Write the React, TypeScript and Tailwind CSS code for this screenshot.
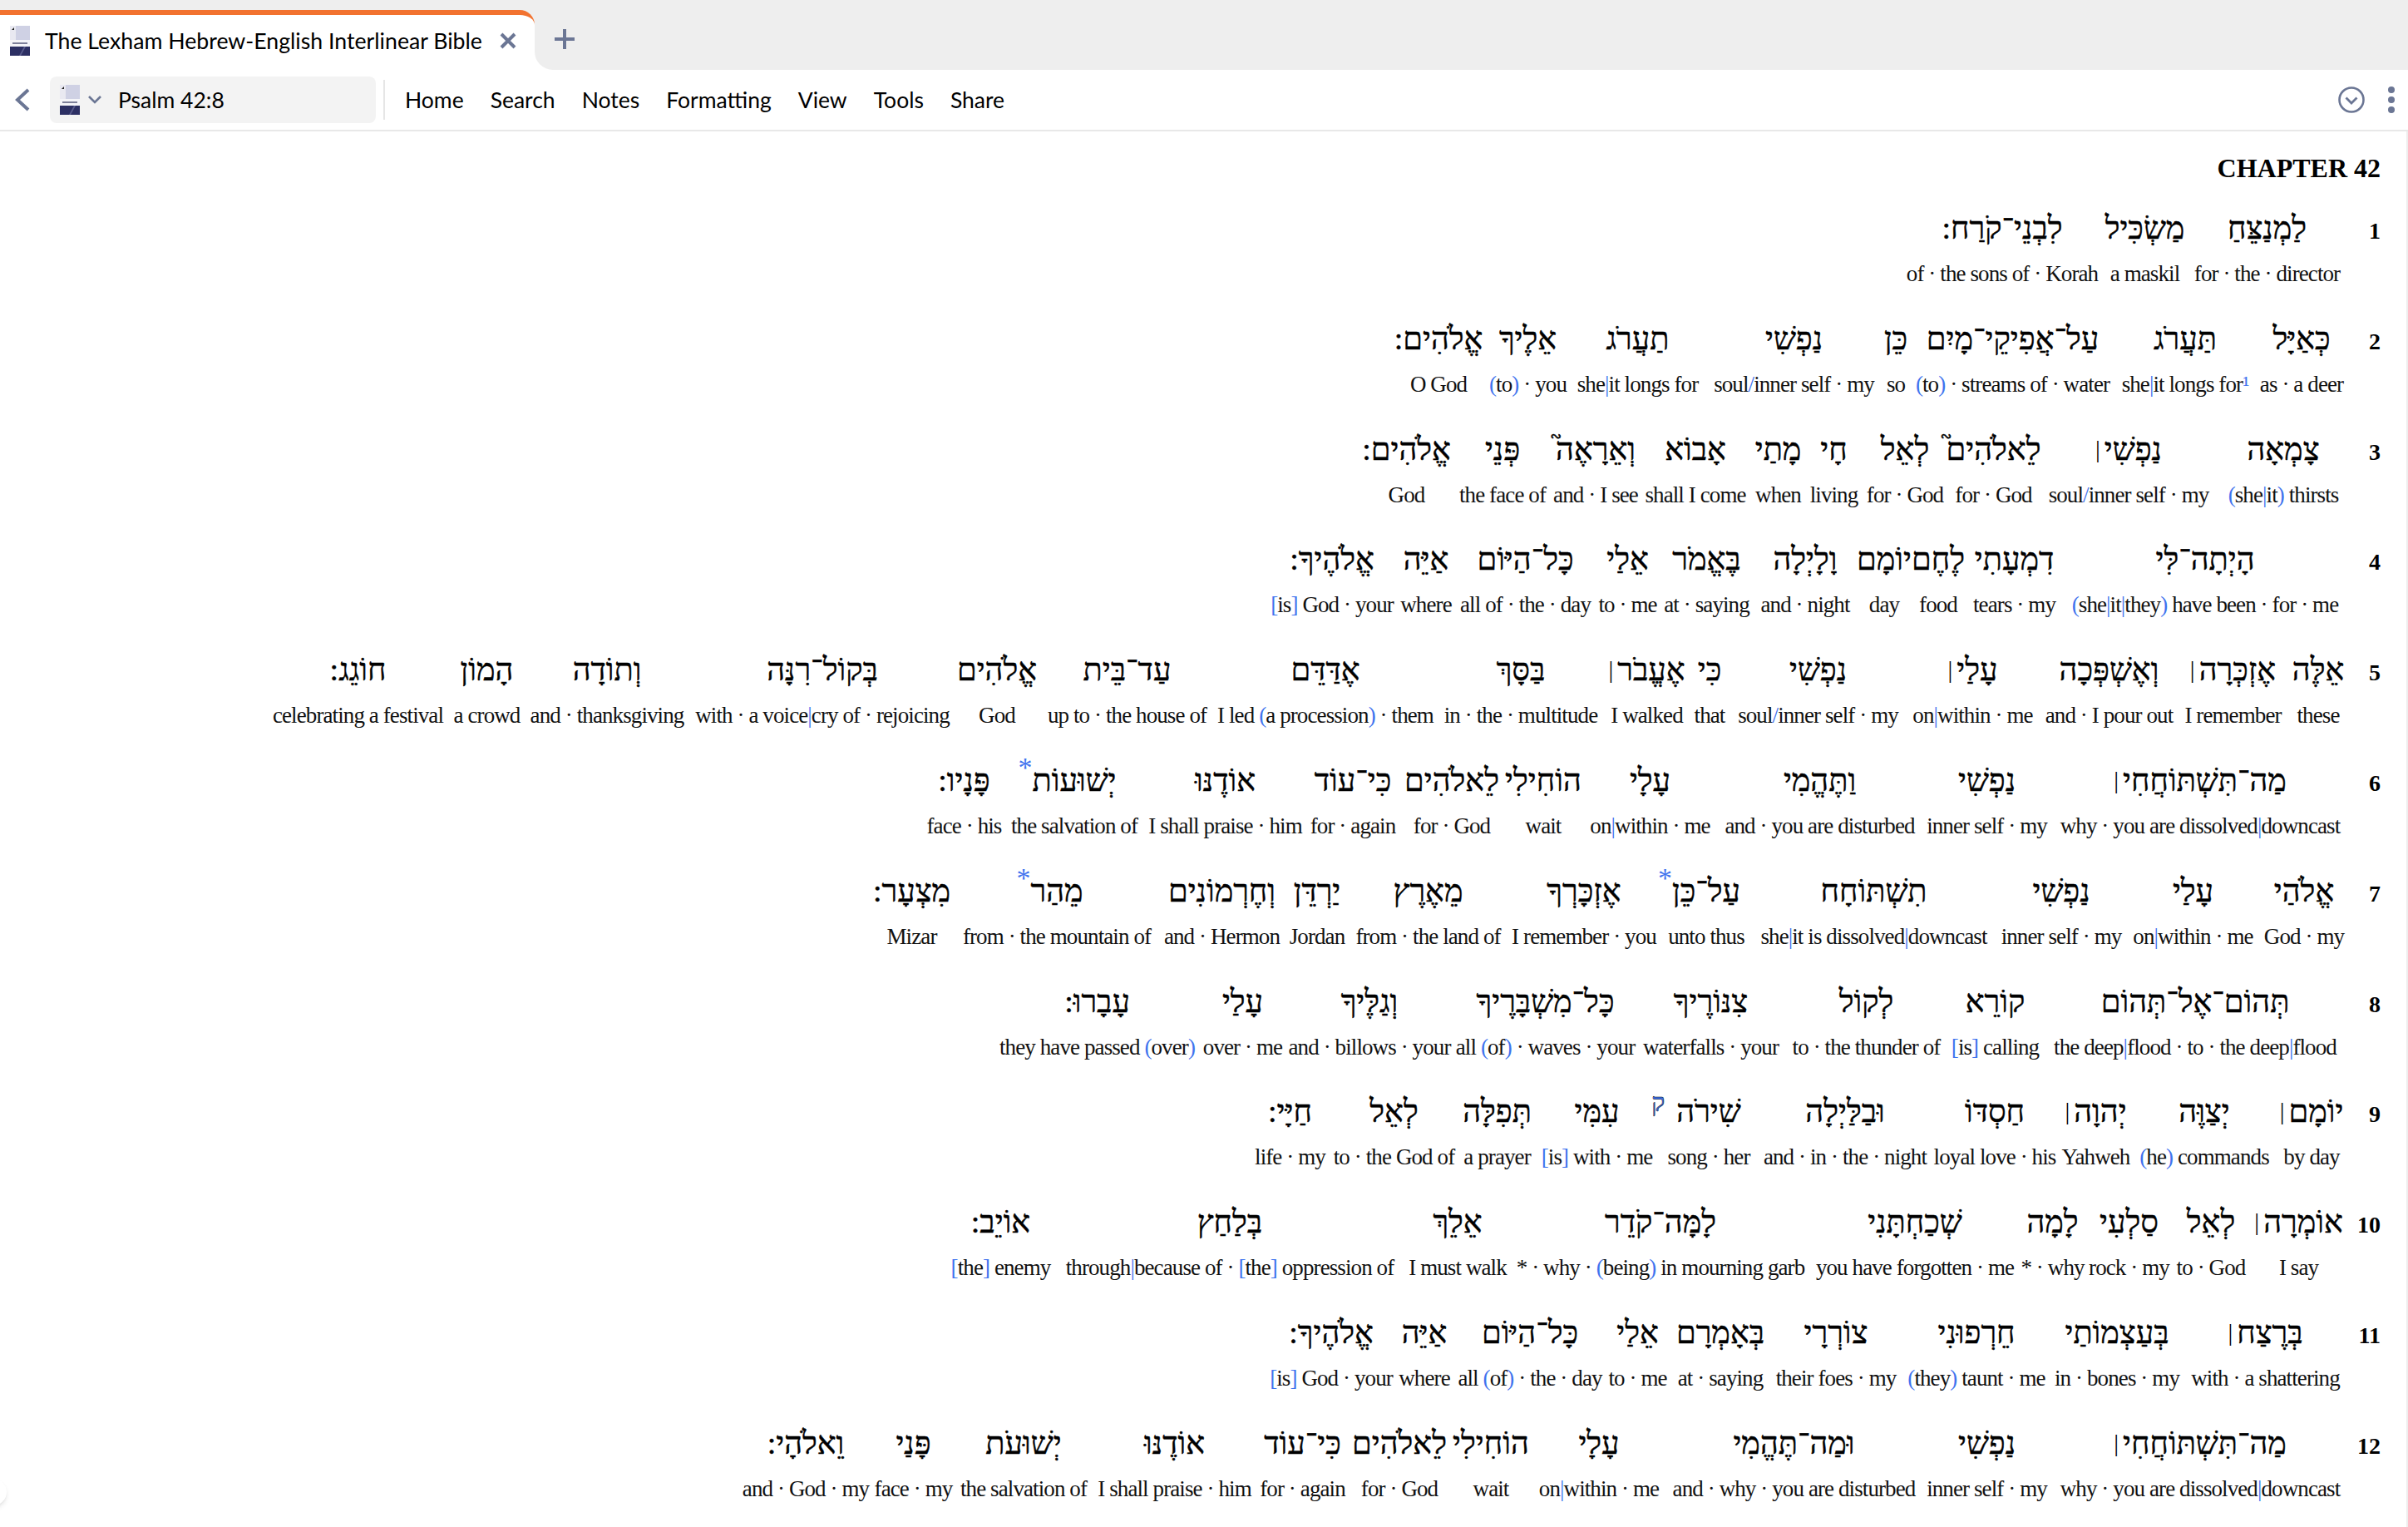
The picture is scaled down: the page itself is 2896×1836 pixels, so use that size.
import React from 'react';

type Cell = [string, string, string, string?];

const rows: { n: number; cells: Cell[] }[] = [
  { n: 1, cells: [
    ['לַמְנַצֵּחַ', 'for · the · director', 'w-[195px]'],
    ['מַשְׂכִּיל', 'a maskil', 'w-[99px]'],
    ['לִבְנֵי־קֹרַח:', 'of · the sons of · Korah', 'w-[244px]'],
  ] },
  { n: 2, cells: [
    ['כְּאַיָּל', 'as · a deer', 'w-[112px]'],
    ['תַּעֲרֹג', 'she|it longs for¹', 'w-[168px]'],
    ['עַל־אֲפִיקֵי־מָיִם', '(to) · streams of · water', 'w-[247px]'],
    ['כֵּן', 'so', 'w-[34px]'],
    ['נַפְשִׁי', 'soul/inner self · my', 'w-[211px]'],
    ['תַעֲרֹג', 'she|it longs for', 'w-[165px]'],
    ['אֵלֶיךָ', '(to) · you', 'w-[99px]'],
    ['אֱלֹהִים:', 'O God', 'w-[116px]'],
  ] },
  { n: 3, cells: [
    ['צָמְאָה', '(she|it) thirsts', 'w-[156px]'],
    ['נַפְשִׁי׀', 'soul/inner self · my', 'w-[216px]'],
    ['לֵאלֹהִים֮', 'for · God', 'w-[109px]'],
    ['לְאֵל', 'for · God', 'w-[104px]'],
    ['חָי', 'living', 'w-[67px]'],
    ['מָתַי', 'when', 'w-[67px]'],
    ['אָבוֹא', 'shall I come', 'w-[132px]'],
    ['וְאֵרָאֶה֮', 'and · I see', 'w-[108px]'],
    ['פְּנֵי', 'the face of', 'w-[116px]'],
    ['אֱלֹהִים:', 'God', 'w-[115px]'],
  ] },
  { n: 4, cells: [
    ['הָיְתָה־לִּי', '(she|it|they) have been · for · me', 'w-[344px]'],
    ['דִמְעָתִי', 'tears · my', 'w-[115px]'],
    ['לֶחֶם', 'food', 'w-[68px]'],
    ['יוֹמָם', 'day', 'w-[62px]'],
    ['וָלָיְלָה', 'and · night', 'w-[128px]'],
    ['בֶּאֱמֹר', 'at · saying', 'w-[109px]'],
    ['אֵלַי', 'to · me', 'w-[81px]'],
    ['כָּל־הַיּוֹם', 'all of · the · day', 'w-[165px]'],
    ['אַיֵּה', 'where', 'w-[74px]'],
    ['אֱלֹהֶיךָ:', '[is] God · your', 'w-[152px]'],
  ] },
  { n: 5, cells: [
    ['אֵלֶּה', 'these', 'w-[72px]'],
    ['אֶזְכְּרָה׀', 'I remember', 'w-[133px]'],
    ['וְאֶשְׁפְּכָה', 'and · I pour out', 'w-[165px]'],
    ['עָלַי׀', 'on|within · me', 'w-[163px]'],
    ['נַפְשִׁי', 'soul/inner self · my', 'w-[209px]'],
    ['כִּי', 'that', 'w-[52px]'],
    ['אֶעֱבֹר׀', 'I walked', 'w-[99px]'],
    ['בַּסָּךְ', 'in · the · multitude', 'w-[204px]'],
    ['אֶדַּדֵּם', 'I led (a procession) · them', 'w-[266px]'],
    ['עַד־בֵּית', 'up to · the house of', 'w-[211px]'],
    ['אֱלֹהִים', 'God', 'w-[102px]'],
    ['בְּקוֹל־רִנָּה', 'with · a voice|cry of · rejoicing', 'w-[318px]'],
    ['וְתוֹדָה', 'and · thanksgiving', 'w-[200px]'],
    ['הָמוֹן', 'a crowd', 'w-[89px]'],
    ['חוֹגֵג:', 'celebrating a festival', 'w-[221px]'],
  ] },
  { n: 6, cells: [
    ['מַה־תִּשְׁתּוֹחֲחִי׀', 'why · you are dissolved|downcast', 'w-[356px]'],
    ['נַפְשִׁי', 'inner self · my', 'w-[157px]'],
    ['וַתֶּהֱמִי', 'and · you are disturbed', 'w-[245px]'],
    ['עָלָי', 'on|within · me', 'w-[163px]'],
    ['הוֹחִילִי', 'wait', 'w-[94px]'],
    ['לֵאלֹהִים', 'for · God', 'w-[126px]'],
    ['כִּי־עוֹד', 'for · again', 'w-[112px]'],
    ['אוֹדֶנּוּ', 'I shall praise · him', 'w-[195px]'],
    ['יְשׁוּעוֹת', 'the salvation of', 'w-[168px]', '*'],
    ['פָּנָיו:', 'face · his', 'w-[97px]'],
  ] },
  { n: 7, cells: [
    ['אֱלֹהַי', 'God · my', 'w-[106px]'],
    ['עָלַי', 'on|within · me', 'w-[161px]'],
    ['נַפְשִׁי', 'inner self · my', 'w-[156px]'],
    ['תִשְׁתּוֹחָח', 'she|it is dissolved|downcast', 'w-[295px]'],
    ['עַל־כֵּן', 'unto thus', 'w-[108px]', '*'],
    ['אֶזְכָּרְךָ', 'I remember · you', 'w-[186px]'],
    ['מֵאֶרֶץ', 'from · the land of', 'w-[189px]'],
    ['יַרְדֵּן', 'Jordan', 'w-[78px]'],
    ['וְחֶרְמוֹנִים', 'and · Hermon', 'w-[151px]'],
    ['מֵהַר', 'from · the mountain of', 'w-[246px]', '*'],
    ['מִצְעָר:', 'Mizar', 'w-[103px]'],
  ] },
  { n: 8, cells: [
    ['תְּהוֹם־אֶל־תְּהוֹם', 'the deep|flood · to · the deep|flood', 'w-[368px]'],
    ['קוֹרֵא', '[is] calling', 'w-[113px]'],
    ['לְקוֹל', 'to · the thunder of', 'w-[197px]'],
    ['צִנּוֹרֶיךָ', 'waterfalls · your', 'w-[177px]'],
    ['כָּל־מִשְׁבָּרֶיךָ', 'all (of) · waves · your', 'w-[221px]'],
    ['וְגַלֶּיךָ', 'and · billows · your', 'w-[202px]'],
    ['עָלַי', 'over · me', 'w-[103px]'],
    ['עָבָרוּ:', 'they have passed (over)', 'w-[247px]'],
  ] },
  { n: 9, cells: [
    ['יוֹמָם׀', 'by day', 'w-[88px]'],
    ['יְצַוֶּה', '(he) commands', 'w-[170px]'],
    ['יְהוָה׀', 'Yahweh', 'w-[91px]'],
    ['חַסְדּוֹ', 'loyal love · his', 'w-[152px]'],
    ['וּבַלַּיְלָה', 'and · in · the · night', 'w-[208px]'],
    ['שִׁירֹה', 'song · her', 'w-[120px]', 'ק'],
    ['עִמִּי', '[is] with · me', 'w-[149px]'],
    ['תְּפִלָּה', 'a prayer', 'w-[91px]'],
    ['לְאֵל', 'to · the God of', 'w-[157px]'],
    ['חַיָּי:', 'life · my', 'w-[93px]'],
  ] },
  { n: 10, cells: [
    ['אוֹמְרָה׀', 'I say', 'w-[119px]'],
    ['לְאֵל', 'to · God', 'w-[92px]'],
    ['סַלְעִי', 'rock · my', 'w-[105px]'],
    ['לָמָה', '* · why', 'w-[79px]'],
    ['שְׁכַחְתָּנִי', 'you have forgotten · me', 'w-[252px]'],
    ['לָמָּה־קֹדֵר', '* · why · (being) in mourning garb', 'w-[360px]'],
    ['אֵלֵךְ', 'I must walk', 'w-[128px]'],
    ['בְּלַחַץ', 'through|because of · [the] oppression of', 'w-[420px]'],
    ['אוֹיֵב:', '[the] enemy', 'w-[131px]'],
  ] },
  { n: 11, cells: [
    ['בְּרֶצַח׀', 'with · a shattering', 'w-[199px]'],
    ['בְּעַצְמוֹתַי', 'in · bones · my', 'w-[158px]'],
    ['חֵרְפוּנִי', '(they) taunt · me', 'w-[180px]'],
    ['צוֹרְרָי', 'their foes · my', 'w-[158px]'],
    ['בְּאָמְרָם', 'at · saying', 'w-[120px]'],
    ['אֵלַי', 'to · me', 'w-[79px]'],
    ['כָּל־הַיּוֹם', 'all (of) · the · day', 'w-[180px]'],
    ['אַיֵּה', 'where', 'w-[74px]'],
    ['אֱלֹהֶיךָ:', '[is] God · your', 'w-[150px]'],
  ] },
  { n: 12, cells: [
    ['מַה־תִּשְׁתּוֹחֲחִי׀', 'why · you are dissolved|downcast', 'w-[356px]'],
    ['נַפְשִׁי', 'inner self · my', 'w-[157px]'],
    ['וּמַה־תֶּהֱמִי', 'and · why · you are disturbed', 'w-[307px]'],
    ['עָלָי', 'on|within · me', 'w-[162px]'],
    ['הוֹחִילִי', 'wait', 'w-[98px]'],
    ['לֵאלֹהִים', 'for · God', 'w-[122px]'],
    ['כִּי־עוֹד', 'for · again', 'w-[111px]'],
    ['אוֹדֶנּוּ', 'I shall praise · him', 'w-[197px]'],
    ['יְשׁוּעֹת', 'the salvation of', 'w-[166px]'],
    ['פָּנַי', 'face · my', 'w-[99px]'],
    ['וֵאלֹהָי:', 'and · God · my', 'w-[160px]'],
  ] },
];

function BookIcon() {
  return (
    <svg viewBox="0 0 24 36" className="h-9 w-6 shrink-0">
      <rect width="24" height="36" fill="#f4f4f8" />
      <rect x="7" y="0" width="17" height="17" fill="#cfd1e4" />
      <rect x="0" y="0" width="7" height="17" fill="#e9e9f1" />
      <path d="M2 5l3-3v3z" fill="#222" />
      <rect x="3" y="20" width="18" height="2" fill="#7d7f99" />
      <rect x="0" y="25" width="24" height="11" fill="#2c2f63" />
      <path d="M11 36l6-11h2l-6 11z" fill="#585b8c" />
    </svg>
  );
}

// blue marks inside the gloss: brackets, parens, slashes, note numbers
function Gloss({ text }: { text: string }) {
  const parts = text.split(/([()[\]|/¹])/);
  return (
    <div dir="ltr" className="mt-2 whitespace-nowrap font-['Liberation_Serif',serif] text-[27px] leading-[32px] tracking-[-0.9px] text-[#111]">
      {parts.map((p, i) =>
        /^[()[\]|/¹]$/.test(p) ? (
          <span key={i} className="text-[#3f73ee]">{p}</span>
        ) : (
          <span key={i}>{p}</span>
        ),
      )}
    </div>
  );
}

function Word({ cell }: { cell: Cell }) {
  const [heb, gloss, width, mark] = cell;
  const hasPaseq = heb.endsWith('׀');
  return (
    <div className={`flex shrink-0 flex-col items-center ${width}`}>
      <div dir="rtl" className="relative whitespace-nowrap font-['Liberation_Serif',serif] text-[38px] leading-[62px] text-black [-webkit-text-stroke:0.5px_black]">
        {hasPaseq ? heb.slice(0, -1) : heb}
        {hasPaseq && <span className="mr-[5px] align-[3px] text-[29px] font-normal [-webkit-text-stroke:0]">|</span>}
        {mark === '*' && (
          <span className="absolute right-full top-[1px] text-[34px] leading-[30px] text-[#3f73ee] [-webkit-text-stroke:0]">*</span>
        )}
        {mark === 'ק' && (
          <span className="absolute right-full top-[6px] mr-[14px] text-[30px] leading-[30px] text-[#3f73ee]">ק</span>
        )}
      </div>
      <Gloss text={gloss} />
    </div>
  );
}

export default function App() {
  return (
    <div className="relative h-[1836px] w-[2896px] overflow-hidden bg-white font-['Lato',sans-serif] text-black">
      <div className="flex h-[84px]">
        <div className="bg-[#eeeeee] pt-3">
          <div className="flex h-[72px] w-[643px] items-center rounded-tr-[18px] border-t-[6px] border-[#f2722f] bg-white pb-1 pl-3">
            <BookIcon />
            <span className="ml-[18px] whitespace-nowrap text-[26.7px] leading-none">The Lexham Hebrew-English Interlinear Bible</span>
            <svg viewBox="0 0 20 20" className="ml-auto mr-[22px] h-5 w-5 shrink-0 text-[#6b7694]">
              <path d="M2 2l16 16M18 2L2 18" stroke="currentColor" strokeWidth="4" fill="none" />
            </svg>
          </div>
        </div>
        <div className="flex flex-1 items-center rounded-bl-[22px] bg-[#eeeeee] pl-6 pt-2.5">
          <svg viewBox="0 0 24 24" className="h-6 w-6 text-[#6b7694]">
            <path d="M12 0v24M0 12h24" stroke="currentColor" strokeWidth="4" fill="none" />
          </svg>
        </div>
      </div>

      <div className="flex h-[74px] items-center border-b-2 border-[#e8e8e8] pr-4">
        <svg viewBox="0 0 18 28" className="ml-[18px] h-7 w-[18px] text-[#6b7694]">
          <path d="M16 2L3 14l13 12" stroke="currentColor" strokeWidth="4" fill="none" />
        </svg>
        <div className="ml-6 flex h-14 w-[392px] items-center rounded-lg bg-[#f3f3f3] pl-3">
          <BookIcon />
          <svg viewBox="0 0 16 10" className="ml-[10px] h-[10px] w-4 text-[#6b7694]">
            <path d="M1 1l7 7 7-7" stroke="currentColor" strokeWidth="2.6" fill="none" />
          </svg>
          <span className="ml-5 text-[26.5px] leading-none">Psalm 42:8</span>
        </div>
        <div className="ml-[9px] h-12 w-0.5 bg-[#e6e6e6]" />
        <nav className="ml-6 flex gap-8 text-[26.5px] leading-none">
          <span>Home</span>
          <span>Search</span>
          <span>Notes</span>
          <span>Formatting</span>
          <span>View</span>
          <span>Tools</span>
          <span>Share</span>
        </nav>
        <svg viewBox="0 0 32 32" className="ml-auto h-8 w-8 text-[#6b7694]">
          <circle cx="16" cy="16" r="14.5" stroke="currentColor" strokeWidth="2.6" fill="none" />
          <path d="M9.5 13.5l6.5 6.5 6.5-6.5" stroke="currentColor" strokeWidth="2.8" fill="none" />
        </svg>
        <div className="ml-[28px] flex flex-col gap-1 text-[#6b7694]">
          <span className="h-2 w-2 rounded-full bg-current" />
          <span className="h-2 w-2 rounded-full bg-current" />
          <span className="h-2 w-2 rounded-full bg-current" />
        </div>
      </div>

      <main className="h-[1678px] border-r-2 border-[#eeeeee] pr-[31px] font-['Liberation_Serif',serif]">
        <h1 className="pt-[26px] text-right text-[32px] font-bold leading-[36px]">CHAPTER 42</h1>
        <div className="pt-[23px]">
          {rows.map((row) => (
            <div key={row.n} dir="rtl" className="flex h-[132.8px] items-start">
              <div className="w-[39px] shrink-0 pt-[4px] text-right text-[28px] font-bold leading-[62px]">{row.n}</div>
              {row.cells.map((cell, i) => (
                <Word key={i} cell={cell} />
              ))}
            </div>
          ))}
        </div>
      </main>

      <div className="absolute left-[-24px] top-[1778px] h-8 w-8 rounded-full bg-white shadow-md" />
    </div>
  );
}
